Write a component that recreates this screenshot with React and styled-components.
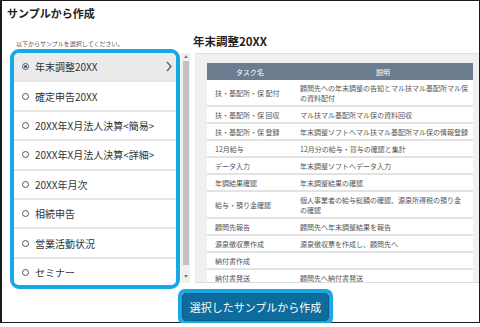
import React from 'react';
import styled, { createGlobalStyle } from 'styled-components';

const RING = '#17a9e6';

const GlobalStyle = createGlobalStyle`
  body {
    margin: 0;
    background: #fff;
    font-family: "Noto Sans CJK JP", "Noto Sans", sans-serif;
  }
`;

const Window = styled.div`
  box-sizing: border-box;
  width: 480px;
  height: 323px;
  border: 1px solid #1b1b1b;
  border-left-width: 2px;
  display: flex;
  flex-direction: column;
  background: #fff;
`;

const Title = styled.h1`
  margin: 0;
  flex: none;
  height: 24px;
  line-height: 24px;
  padding-left: 5px;
  font-size: 11px;
  font-weight: 700;
  color: #222;
`;

const Body = styled.div`
  flex: none;
  height: 264px;
  display: flex;
  padding-left: 8px;
`;

const LeftCol = styled.div`
  width: 182px;
  flex: none;
  display: flex;
  flex-direction: column;
`;

const Hint = styled.p`
  margin: 0;
  height: 24px;
  box-sizing: border-box;
  padding: 15px 0 0 6px;
  font-size: 6px;
  line-height: 8px;
  color: #555;
`;

const ListWrap = styled.div`
  display: flex;
  align-items: flex-start;
  height: 240px;
`;

const ListRing = styled.div`
  width: 170px;
  height: 240px;
  box-sizing: border-box;
  border: 4px solid ${RING};
  border-radius: 9px;
  overflow: hidden;
  background: #fff;
`;

const Item = styled.div`
  height: 29.4px;
  box-sizing: border-box;
  border-bottom: 2px solid #e6e6e6;
  display: flex;
  align-items: center;
  gap: 6px;
  padding: 0 4px 0 8px;
  font-size: 10px;
  color: #333;
  background: ${p => (p.$active ? '#ebebeb' : '#fff')};
`;

const Radio = styled.span`
  flex: none;
  width: 7px;
  height: 7px;
  box-sizing: border-box;
  border: 1px solid #555;
  border-radius: 50%;
  display: flex;
  align-items: center;
  justify-content: center;
  &::after {
    content: '';
    width: 3px;
    height: 3px;
    border-radius: 50%;
    background: #1f5c96;
    display: ${p => (p.$checked ? 'block' : 'none')};
  }
`;

const Chevron = styled.svg`
  margin-left: auto;
  flex: none;
`;

const Scrollbar = styled.div`
  margin: 4px 0 0 1px;
  width: 9px;
  height: 230px;
  background: #f0f0f0;
  display: flex;
  flex-direction: column;
  align-items: center;
`;

const Arrow = styled.span`
  width: 0;
  height: 0;
  border-left: 2px solid transparent;
  border-right: 2px solid transparent;
  ${p =>
    p.$down
      ? `border-top: 3px solid #777; margin: auto 0 5px;`
      : `border-bottom: 3px solid #777; margin-top: 2px;`}
`;

const Thumb = styled.div`
  margin-top: 3px;
  width: 6px;
  height: 204px;
  background: #c2c2c2;
`;

const RightCol = styled.div`
  flex: 1;
  min-width: 0;
  margin-left: 1px;
  display: flex;
  flex-direction: column;
`;

const Heading = styled.h2`
  margin: 0;
  height: 28px;
  box-sizing: border-box;
  padding-top: 10px;
  line-height: 12px;
  font-size: 11.5px;
  font-weight: 700;
  color: #222;
`;

const Panel = styled.div`
  margin-left: 2px;
  height: 230px;
  box-sizing: border-box;
  background: #f0f0f0;
  border-top: 1px solid #e0e0e0;
  border-bottom: 1px solid #dcdcdc;
  padding: 9px 6px 0 12px;
  overflow: hidden;
`;

const TableHead = styled.div`
  display: grid;
  grid-template-columns: 86px 1fr;
  height: 17px;
  align-items: center;
  text-align: center;
  background: #6c7b8d;
  color: #fff;
  font-size: 7px;
`;

const Row = styled.div`
  display: grid;
  grid-template-columns: 86px 1fr;
  align-items: center;
  box-sizing: border-box;
  height: ${p => (p.$tall ? 27 : 17)}px;
  background: #fff;
  border-bottom: 2px solid #e3e3e3;
  font-size: 7px;
  line-height: 10px;
  color: #555;
`;

const Cell = styled.div`
  padding-left: ${p => (p.$first ? 8 : 7)}px;
  white-space: pre;
  overflow: hidden;
`;

const Footer = styled.div`
  flex: none;
  padding-left: 176px;
`;

const ButtonRing = styled.div`
  width: 155px;
  height: 36px;
  box-sizing: border-box;
  border: 4px solid ${RING};
  border-radius: 7px;
  background: #fff;
`;

const CreateButton = styled.button`
  display: block;
  width: 100%;
  height: 100%;
  padding: 0;
  border: 1px solid #0a5c88;
  border-radius: 3px;
  background: #0d6c9c;
  color: #fff;
  font-family: inherit;
  font-size: 11px;
`;

const samples = [
  '年末調整20XX',
  '確定申告20XX',
  '20XX年X月法人決算<簡易>',
  '20XX年X月法人決算<詳細>',
  '20XX年月次',
  '相続申告',
  '営業活動状況',
  'セミナー',
];

const tasks = [
  ['扶・基配所・保 配付', '顧問先への年末調整の告知とマル扶マル基配所マル保\nの資料配付'],
  ['扶・基配所・保 回収', 'マル扶マル基配所マル保の資料回収'],
  ['扶・基配所・保 登録', '年末調整ソフトへマル扶マル基配所マル保の情報登録'],
  ['12月給与', '12月分の給与・賞与の確認と集計'],
  ['データ入力', '年末調整ソフトへデータ入力'],
  ['年調結果確認', '年末調整結果の確認'],
  ['給与・預り金確認', '個人事業者の給与総額の確認、源泉所得税の預り金\nの確認'],
  ['顧問先報告', '顧問先へ年末調整結果を報告'],
  ['源泉徴収票作成', '源泉徴収票を作成し、顧問先へ'],
  ['納付書作成', ''],
  ['納付書発送', '顧問先へ納付書発送'],
];

export default function App() {
  const selected = 0;
  return (
    <>
      <GlobalStyle />
      <Window>
        <Title>サンプルから作成</Title>
        <Body>
          <LeftCol>
            <Hint>以下からサンプルを選択してください。</Hint>
            <ListWrap>
              <ListRing>
                {samples.map((name, i) => (
                  <Item key={name} $active={i === selected}>
                    <Radio $checked={i === selected} />
                    <span>{name}</span>
                    {i === selected && (
                      <Chevron width="6" height="11" viewBox="0 0 6 11">
                        <polyline points="1,1 5,5.5 1,10" fill="none" stroke="#555" strokeWidth="1.2" />
                      </Chevron>
                    )}
                  </Item>
                ))}
              </ListRing>
              <Scrollbar>
                <Arrow />
                <Thumb />
                <Arrow $down />
              </Scrollbar>
            </ListWrap>
          </LeftCol>
          <RightCol>
            <Heading>年末調整20XX</Heading>
            <Panel>
              <TableHead>
                <div>タスク名</div>
                <div>説明</div>
              </TableHead>
              {tasks.map(([task, desc]) => (
                <Row key={task} $tall={desc.includes('\n')}>
                  <Cell $first>{task}</Cell>
                  <Cell>{desc}</Cell>
                </Row>
              ))}
            </Panel>
          </RightCol>
        </Body>
        <Footer>
          <ButtonRing>
            <CreateButton>選択したサンプルから作成</CreateButton>
          </ButtonRing>
        </Footer>
      </Window>
    </>
  );
}
